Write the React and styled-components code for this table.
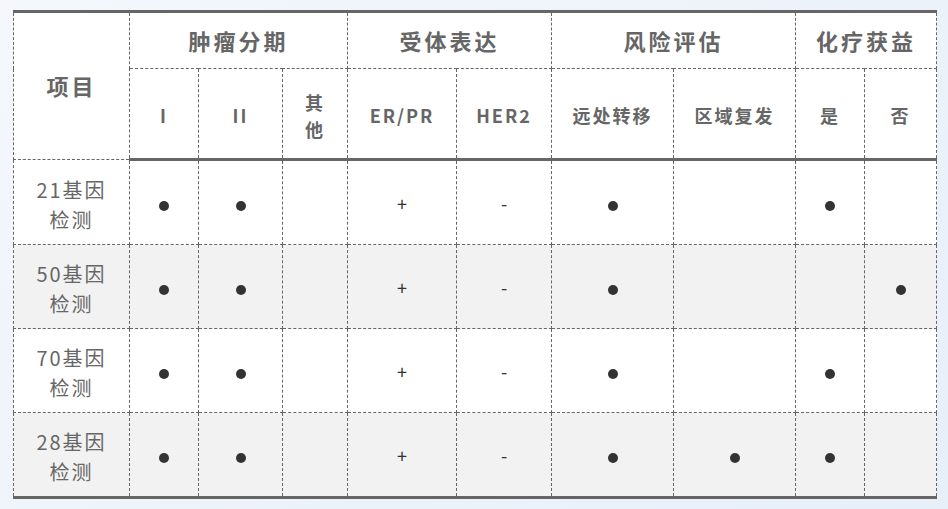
import React from "react";
import styled, { createGlobalStyle } from "styled-components";

const GlobalStyle = createGlobalStyle`
  html, body {
    margin: 0;
    padding: 0;
  }
  body {
    background: linear-gradient(135deg, #f4f7fc 0%, #eef3fa 50%, #e7eff9 100%);
    min-height: 509px;
    font-family: "Noto Sans CJK SC", "Noto Sans", sans-serif;
  }
`

const Page = styled.div`
  padding: 10px 12px 0 13px;
`

const Table = styled.table`
  border-collapse: collapse;
  width: 923px;
  table-layout: fixed;
  background: #fff;
  border-top: 3px solid #666;
  border-bottom: 3px solid #666;
  color: #666;
`

const Head = styled.thead`
  tr:last-child th {
    border-bottom: 3px solid #666;
    padding-top: 4px;
  }
`

const Th = styled.th`
  border: 1px dashed #666;
  font-weight: 700;
  font-size: ${(p) => (p.$big ? "22px" : "18px")};
  letter-spacing: ${(p) => (p.$big ? "3px" : "2px")};
  height: ${(p) => p.$h || "auto"};
  padding: 0;
  text-align: center;
  vertical-align: middle;
  line-height: 1.45;
`

const Tr = styled.tr`
  background: ${(p) => (p.$shade ? "#f2f2f2" : "#fff")};
`

const Td = styled.td`
  border: 1px dashed #666;
  height: 83px;
  padding: 0;
  text-align: center;
  vertical-align: middle;
  font-size: 18px;
  color: #333;
`

const Name = styled.div`
  font-size: 20px;
  line-height: 30px;
  color: #666;
  letter-spacing: 2px;
  padding-top: 5px;
`

const Dot = styled.span`
  display: inline-block;
  width: 10px;
  height: 10px;
  border-radius: 50%;
  background: #333;
  vertical-align: middle;
`

const widths = [116, 69, 84, 65, 109, 95, 122, 122, 69, 72];

const rows = [
  { n: "21", v: ["d", "d", "", "+", "-", "d", "", "d", ""] },
  { n: "50", v: ["d", "d", "", "+", "-", "d", "", "", "d"] },
  { n: "70", v: ["d", "d", "", "+", "-", "d", "", "d", ""] },
  { n: "28", v: ["d", "d", "", "+", "-", "d", "d", "d", ""] },
];

const Cell = ({ v }) => <Td>{v === "d" ? <Dot /> : v}</Td>;

const App = () => {
  return (
    <>
      <GlobalStyle />
      <Page>
        <Table>
          <colgroup>
            {widths.map((w, i) => (
              <col key={i} style={{ width: w }} />
            ))}
          </colgroup>
          <Head>
            <tr>
              <Th $big rowSpan={2}>项目</Th>
              <Th $big $h="55px" colSpan={3}>肿瘤分期</Th>
              <Th $big colSpan={2}>受体表达</Th>
              <Th $big colSpan={2}>风险评估</Th>
              <Th $big colSpan={2}>化疗获益</Th>
            </tr>
            <tr>
              <Th $h="85px">I</Th>
              <Th>II</Th>
              <Th>其<br />他</Th>
              <Th>ER/PR</Th>
              <Th>HER2</Th>
              <Th>远处转移</Th>
              <Th>区域复发</Th>
              <Th>是</Th>
              <Th>否</Th>
            </tr>
          </Head>
          <tbody>
            {rows.map((r, i) => (
              <Tr key={r.n} $shade={i % 2 === 1}>
                <Td>
                  <Name>{r.n}基因<br />检测</Name>
                </Td>
                {r.v.map((v, j) => (
                  <Cell key={j} v={v} />
                ))}
              </Tr>
            ))}
          </tbody>
        </Table>
      </Page>
    </>
  );
};

export default App;
